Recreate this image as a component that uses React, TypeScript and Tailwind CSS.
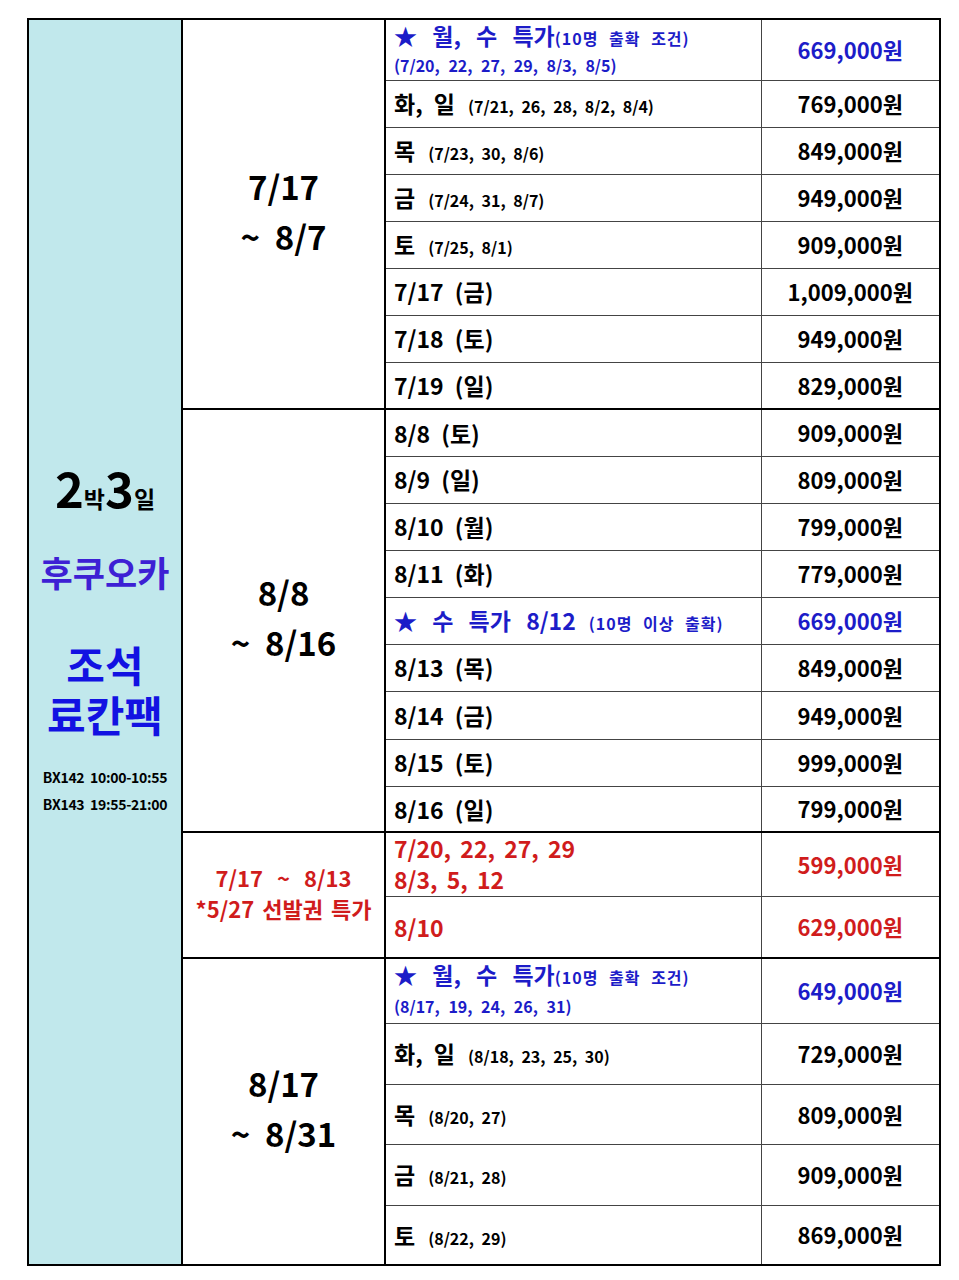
import React from "react";

const F = { fontFamily: '"Noto Sans CJK KR", "Noto Sans", sans-serif' };

type Row = { h: number; left: React.ReactNode; price: string; color?: "blue" | "red" | "black" };

const cellL = "border border-[#444] px-[8px] py-0 align-middle";
const cellP = "border border-[#444] p-0 text-center align-middle text-[22px] font-bold";

function Main({ main, sub }: { main: string; sub?: string }) {
  return (
    <div className="flex items-baseline whitespace-pre text-black">
      <span className="text-[23px] font-bold [word-spacing:6px]">{main}</span>
      {sub && <span className="ml-[13px] text-[16px] font-bold [word-spacing:4px]">{sub}</span>}
    </div>
  );
}

function Star({ head, small, second, tall }: { head: string; small: string; second?: string; tall?: boolean }) {
  return (
    <div className="text-[#1c1cc8]">
      <div className="flex items-baseline whitespace-pre leading-[28px]">
        <span className="text-[23px] font-bold [word-spacing:10px]">{head}</span>
        <span className="text-[16px] font-bold tracking-[1px] [word-spacing:6px]">{small}</span>
      </div>
      {second && (
        <div className={`text-[16px] font-bold ${tall ? "leading-[30px]" : "leading-[27px]"} [word-spacing:5px] whitespace-pre`}>
          {second}
        </div>
      )}
    </div>
  );
}

export default function App() {
  const g1: Row[] = [
    { h: 61, left: <Star head="★ 월, 수 특가" small="(10명 출확 조건)" second="(7/20, 22, 27, 29, 8/3, 8/5)" />, price: "669,000원", color: "blue" },
    { h: 47, left: <Main main="화, 일" sub="(7/21, 26, 28, 8/2, 8/4)" />, price: "769,000원" },
    { h: 47, left: <Main main="목" sub="(7/23, 30, 8/6)" />, price: "849,000원" },
    { h: 47, left: <Main main="금" sub="(7/24, 31, 8/7)" />, price: "949,000원" },
    { h: 47, left: <Main main="토" sub="(7/25, 8/1)" />, price: "909,000원" },
    { h: 47, left: <Main main="7/17 (금)" />, price: "1,009,000원" },
    { h: 47, left: <Main main="7/18 (토)" />, price: "949,000원" },
    { h: 47, left: <Main main="7/19 (일)" />, price: "829,000원" },
  ];
  const g2: Row[] = [
    { h: 47, left: <Main main="8/8 (토)" />, price: "909,000원" },
    { h: 47, left: <Main main="8/9 (일)" />, price: "809,000원" },
    { h: 47, left: <Main main="8/10 (월)" />, price: "799,000원" },
    { h: 47, left: <Main main="8/11 (화)" />, price: "779,000원" },
    {
      h: 47,
      left: (
        <div className="flex items-baseline whitespace-pre text-[#1c1cc8]">
          <span className="text-[23px] font-bold [word-spacing:10px]">★ 수 특가 8/12</span>
          <span className="ml-[13px] text-[16px] font-bold tracking-[1px] [word-spacing:6px]">(10명 이상 출확)</span>
        </div>
      ),
      price: "669,000원",
      color: "blue",
    },
    { h: 47, left: <Main main="8/13 (목)" />, price: "849,000원" },
    { h: 48, left: <Main main="8/14 (금)" />, price: "949,000원" },
    { h: 47, left: <Main main="8/15 (토)" />, price: "999,000원" },
    { h: 46, left: <Main main="8/16 (일)" />, price: "799,000원" },
  ];
  const g3: Row[] = [
    {
      h: 64,
      left: (
        <div className="text-[23px] font-bold leading-[31px] text-[#d01c1c] whitespace-pre [word-spacing:4px]">
          <div>7/20, 22, 27, 29</div>
          <div>8/3, 5, 12</div>
        </div>
      ),
      price: "599,000원",
      color: "red",
    },
    { h: 62, left: <div className="text-[23px] font-bold text-[#d01c1c]">8/10</div>, price: "629,000원", color: "red" },
  ];
  const g4: Row[] = [
    { h: 65, left: <Star tall head="★ 월, 수 특가" small="(10명 출확 조건)" second="(8/17, 19, 24, 26, 31)" />, price: "649,000원", color: "blue" },
    { h: 61, left: <Main main="화, 일" sub="(8/18, 23, 25, 30)" />, price: "729,000원" },
    { h: 60, left: <Main main="목" sub="(8/20, 27)" />, price: "809,000원" },
    { h: 61, left: <Main main="금" sub="(8/21, 28)" />, price: "909,000원" },
    { h: 60, left: <Main main="토" sub="(8/22, 29)" />, price: "869,000원" },
  ];

  const priceColor = (c?: string) =>
    c === "blue" ? "text-[#1c1cc8]" : c === "red" ? "text-[#d01c1c]" : "text-black";

  const groups: { rows: Row[]; label: React.ReactNode }[] = [
    {
      rows: g1,
      label: (
        <div className="pb-[6px] text-[33px] font-bold leading-[50px] text-black whitespace-pre">
          <div>7/17</div>
          <div>~  8/7</div>
        </div>
      ),
    },
    {
      rows: g2,
      label: (
        <div className="pb-[8px] text-[33px] font-bold leading-[50px] text-black whitespace-pre">
          <div>8/8</div>
          <div>~  8/16</div>
        </div>
      ),
    },
    {
      rows: g3,
      label: (
        <div className="pb-[4px] text-[22px] font-bold leading-[31px] text-[#d01c1c] whitespace-pre">
          <div className="[word-spacing:2px]">7/17  ~  8/13</div>
          <div className="[word-spacing:3px]">*5/27 선발권 특가</div>
        </div>
      ),
    },
    {
      rows: g4,
      label: (
        <div className="pb-[8px] text-[33px] font-bold leading-[50px] text-black whitespace-pre">
          <div>8/17</div>
          <div>~  8/31</div>
        </div>
      ),
    },
  ];

  const total = groups.reduce((a, g) => a + g.rows.length, 0);

  return (
    <div className="w-[959px] h-[1280px] bg-white pt-[18px] pl-[27px]" style={F}>
      <table className="table-fixed border-collapse w-[912px] border-2 border-black">
        <colgroup>
          <col className="w-[154px]" />
          <col className="w-[203px]" />
          <col className="w-[376px]" />
          <col className="w-[179px]" />
        </colgroup>
        <tbody>
          {groups.map((g, gi) =>
            g.rows.map((r, ri) => (
              <tr key={`${gi}-${ri}`} style={{ height: r.h }}>
                {gi === 0 && ri === 0 && (
                  <td rowSpan={total} className="border-2 border-black bg-[#c1e8ec] align-middle text-center p-0">
                    <div className="flex flex-col items-center pb-[4px]">
                      <div className="flex items-baseline font-bold text-black leading-[50px]">
                        <span className="text-[49px]">2</span>
                        <span className="text-[23px]">박</span>
                        <span className="text-[49px]">3</span>
                        <span className="text-[23px]">일</span>
                      </div>
                      <div className="mt-[29px] text-[35px] font-bold text-[#3d20d4] leading-[40px]">후쿠오카</div>
                      <div className="mt-[47px] text-[42px] font-bold text-[#1212e2] leading-[50px]">
                        <div>조석</div>
                        <div>료칸팩</div>
                      </div>
                      <div className="mt-[25px] text-[14px] font-bold text-black leading-[27px] tracking-[-0.3px] whitespace-pre">
                        <div>BX142  10:00-10:55</div>
                        <div>BX143  19:55-21:00</div>
                      </div>
                    </div>
                  </td>
                )}
                {ri === 0 && (
                  <td rowSpan={g.rows.length} className="border-2 border-black text-center align-middle p-0">
                    {g.label}
                  </td>
                )}
                <td className={`${cellL} ${ri === 0 && gi > 0 ? "border-t-2 border-t-black" : ""}`}>{r.left}</td>
                <td className={`${cellP} ${priceColor(r.color)} ${ri === 0 && gi > 0 ? "border-t-2 border-t-black" : ""}`}>
                  {r.price}
                </td>
              </tr>
            ))
          )}
        </tbody>
      </table>
    </div>
  );
}
